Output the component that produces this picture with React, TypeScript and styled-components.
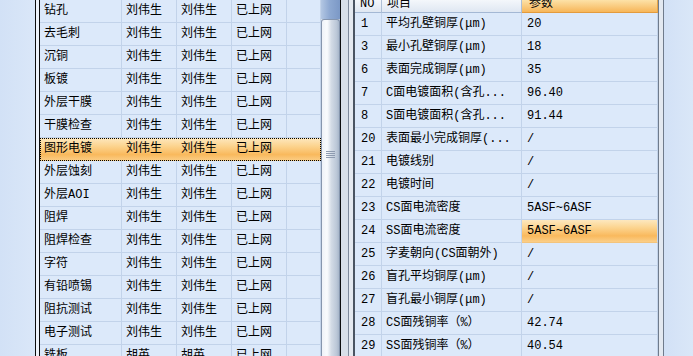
import React from "react";
import styled, { createGlobalStyle, css } from "styled-components";

const GlobalStyle = createGlobalStyle`
  html, body { margin: 0; padding: 0; }
  body { width: 693px; height: 356px; overflow: hidden; background: #d6e4f7; }
`;

const FONT = `"Liberation Mono", "Noto Sans CJK SC", monospace`;

const LINE = "#c2d3ea";
const CELL_BG = "#dce9fa";

const orange = css`
  background: linear-gradient(
    to bottom,
    #fde8bf 0%,
    #fcd48f 35%,
    #f9b95d 72%,
    #fbcf88 100%
  );
`;

const Screen = styled.div`
  display: flex;
  width: 693px;
  height: 356px;
  overflow: hidden;
  background: #d6e4f7;
  font-family: ${FONT};
  font-size: 12px;
  color: #000;
`;

const Gutter = styled.div<{ $w: number }>`
  flex: none;
  width: ${(p) => p.$w}px;
  background: linear-gradient(to right, #d2e1f6, #dae7f8);
`;

/* double black frame around the process list */
const ListFrame = styled.div`
  flex: none;
  display: flex;
  border-left: 1px solid #0c0c0c;
  padding-left: 3px;
  background: #edf2f9;
`;

const ListGrid = styled.div`
  flex: none;
  width: 281px;
  border-left: 1px solid #0c0c0c;
  background: ${CELL_BG};
`;

const ListRow = styled.div<{ $active?: boolean }>`
  display: grid;
  grid-template-columns: 82px 55px 55px 55px 34px;
  height: 23px;
  box-sizing: border-box;
  ${(p) =>
    p.$active &&
    css`
      ${orange};
      outline: 1px dotted #000;
      outline-offset: -1px;
    `}
`;

const ListCell = styled.div<{ $active?: boolean }>`
  box-sizing: border-box;
  height: 23px;
  padding-left: 4px;
  line-height: 22px;
  white-space: nowrap;
  overflow: hidden;
  border-right: 1px solid ${(p) => (p.$active ? "transparent" : LINE)};
  border-bottom: 1px solid ${(p) => (p.$active ? "transparent" : LINE)};
`;

/* vertical scroll bar of the process list */
const ScrollBar = styled.div`
  flex: none;
  width: 19px;
  display: flex;
  flex-direction: column;
  background: linear-gradient(to right, #dfe6f0, #c9d3e0);
`;

const TrackTop = styled.div`
  flex: none;
  height: 19px;
  background: linear-gradient(to right, #b3c7e3 0%, #8ea9d2 45%, #7b98c6 100%);
`;

const Thumb = styled.div`
  flex: 1;
  display: flex;
  flex-direction: column;
  align-items: center;
  padding-top: 131px;
  border: 1px solid #8595ad;
  border-bottom: none;
  border-radius: 3px 3px 0 0;
  background: linear-gradient(
    to right,
    #eef2f8 0%,
    #f9fbfd 30%,
    #d3dbe6 55%,
    #bcc8d8 85%,
    #a8b6ca 100%
  );
`;

const Grip = styled.div`
  width: 9px;
  height: 7px;
  background: repeating-linear-gradient(
    to bottom,
    #8e9bb0 0 1px,
    transparent 1px 2px
  );
`;

const Splitter = styled.div`
  flex: none;
  width: 12px;
  border-left: 1px solid #0c0c0c;
  border-right: 2px solid #4a5462;
  background: linear-gradient(
    to right,
    #d8dfe8 0 7px,
    #7f8a9b 7px 8px,
    #e4e9f0 8px 12px
  );
`;

const ParamGrid = styled.div`
  flex: none;
  width: 303px;
  background: ${CELL_BG};
  border-right: 1px solid #6f7b8c;
`;

const ParamRow = styled.div`
  display: grid;
  grid-template-columns: 27px 140px 136px;
  height: 23px;
`;

const HeaderRow = styled.div`
  display: grid;
  grid-template-columns: 27px 140px 136px;
  height: 13px;
  overflow: hidden;
`;

const HeaderCell = styled.div<{ $sorted?: boolean }>`
  box-sizing: border-box;
  height: 13px;
  display: flex;
  align-items: flex-end;
  padding-left: ${(p) => (p.$sorted ? 7 : 5)}px;
  line-height: 16px;
  white-space: nowrap;
  border-right: 1px solid #aebfd6;
  border-bottom: 1px solid #a4b8d4;
  background: linear-gradient(to bottom, #f4f7fb, #dfe7f2);
  ${(p) =>
    p.$sorted &&
    css`
      background: linear-gradient(to bottom, #fde2a8, #f7b659);
      border-bottom-color: #e39b3c;
      border-right-color: #e6a54a;
    `}
`;

const ParamCell = styled.div<{ $active?: boolean; $pad?: number }>`
  box-sizing: border-box;
  height: 23px;
  padding-left: ${(p) => p.$pad ?? 4}px;
  line-height: 22px;
  white-space: nowrap;
  overflow: hidden;
  border-right: 1px solid ${LINE};
  border-bottom: 1px solid ${LINE};
  ${(p) =>
    p.$active &&
    css`
      ${orange};
      border-bottom-color: #f3c47c;
    `}
`;

const EdgeGap = styled.div`
  flex: none;
  width: 4px;
  background: #e3e9f1;
  border-right: 1px solid #6f7b8c;
`;

type Step = { name: string; maker: string; checker: string; state: string };

const steps: Step[] = [
  { name: "钻孔", maker: "刘伟生", checker: "刘伟生", state: "已上网" },
  { name: "去毛刺", maker: "刘伟生", checker: "刘伟生", state: "已上网" },
  { name: "沉铜", maker: "刘伟生", checker: "刘伟生", state: "已上网" },
  { name: "板镀", maker: "刘伟生", checker: "刘伟生", state: "已上网" },
  { name: "外层干膜", maker: "刘伟生", checker: "刘伟生", state: "已上网" },
  { name: "干膜检查", maker: "刘伟生", checker: "刘伟生", state: "已上网" },
  { name: "图形电镀", maker: "刘伟生", checker: "刘伟生", state: "已上网" },
  { name: "外层蚀刻", maker: "刘伟生", checker: "刘伟生", state: "已上网" },
  { name: "外层AOI", maker: "刘伟生", checker: "刘伟生", state: "已上网" },
  { name: "阻焊", maker: "刘伟生", checker: "刘伟生", state: "已上网" },
  { name: "阻焊检查", maker: "刘伟生", checker: "刘伟生", state: "已上网" },
  { name: "字符", maker: "刘伟生", checker: "刘伟生", state: "已上网" },
  { name: "有铅喷锡", maker: "刘伟生", checker: "刘伟生", state: "已上网" },
  { name: "阻抗测试", maker: "刘伟生", checker: "刘伟生", state: "已上网" },
  { name: "电子测试", maker: "刘伟生", checker: "刘伟生", state: "已上网" },
  { name: "铣板", maker: "胡英", checker: "胡英", state: "已上网" },
];

const ACTIVE_STEP = 6;

type Param = { no: string; item: string; value: string };

const params: Param[] = [
  { no: "1", item: "平均孔壁铜厚(μm)", value: "20" },
  { no: "3", item: "最小孔壁铜厚(μm)", value: "18" },
  { no: "6", item: "表面完成铜厚(μm)", value: "35" },
  { no: "7", item: "C面电镀面积(含孔...", value: "96.40" },
  { no: "8", item: "S面电镀面积(含孔...", value: "91.44" },
  { no: "20", item: "表面最小完成铜厚(...", value: "/" },
  { no: "21", item: "电镀线别", value: "/" },
  { no: "22", item: "电镀时间", value: "/" },
  { no: "23", item: "CS面电流密度", value: "5ASF~6ASF" },
  { no: "24", item: "SS面电流密度", value: "5ASF~6ASF" },
  { no: "25", item: "字麦朝向(CS面朝外)", value: "/" },
  { no: "26", item: "盲孔平均铜厚(μm)", value: "/" },
  { no: "27", item: "盲孔最小铜厚(μm)", value: "/" },
  { no: "28", item: "CS面残铜率（%）", value: "42.74" },
  { no: "29", item: "SS面残铜率（%）", value: "40.54" },
];

const ACTIVE_PARAM = "24";

export default function App() {
  return (
    <>
      <GlobalStyle />
      <Screen>
        <Gutter $w={35} />
        <ListFrame>
          <ListGrid>
            {steps.map((s, i) => {
              const active = i === ACTIVE_STEP;
              return (
                <ListRow key={s.name} $active={active}>
                  <ListCell $active={active}>{s.name}</ListCell>
                  <ListCell $active={active}>{s.maker}</ListCell>
                  <ListCell $active={active}>{s.checker}</ListCell>
                  <ListCell $active={active}>{s.state}</ListCell>
                  <ListCell $active={active} />
                </ListRow>
              );
            })}
          </ListGrid>
        </ListFrame>
        <ScrollBar>
          <TrackTop />
          <Thumb>
            <Grip />
          </Thumb>
        </ScrollBar>
        <Splitter />
        <ParamGrid>
          <HeaderRow>
            <HeaderCell>NO</HeaderCell>
            <HeaderCell>项目</HeaderCell>
            <HeaderCell $sorted>参数</HeaderCell>
          </HeaderRow>
          {params.map((p) => (
            <ParamRow key={p.no}>
              <ParamCell $pad={6}>{p.no}</ParamCell>
              <ParamCell>{p.item}</ParamCell>
              <ParamCell $active={p.no === ACTIVE_PARAM} $pad={5}>
                {p.value}
              </ParamCell>
            </ParamRow>
          ))}
        </ParamGrid>
        <EdgeGap />
        <Gutter $w={29} />
      </Screen>
    </>
  );
}
